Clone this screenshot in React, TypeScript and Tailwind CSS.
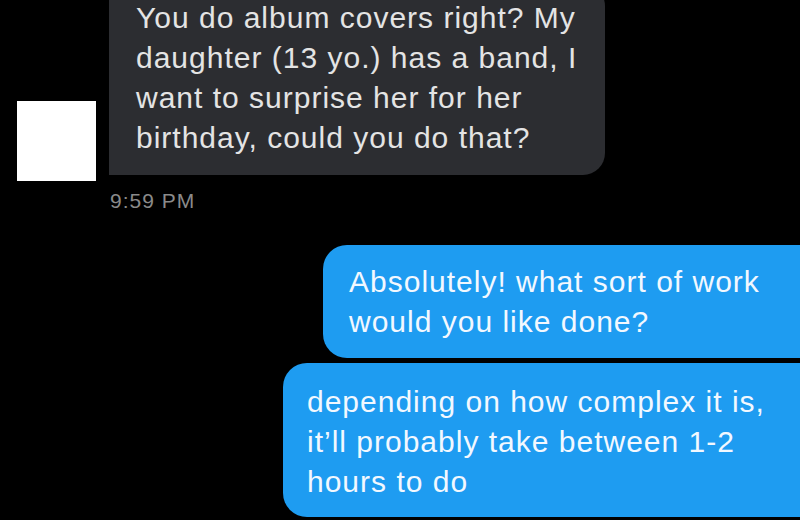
export default function App() {
  return (
    <div
      className="w-[800px] h-[520px] bg-black overflow-hidden flex flex-col"
      style={{ fontFamily: '"Liberation Sans", Arial, sans-serif' }}>
      <div className="flex items-end gap-[13px] pl-[17px] mt-[-16px]">
        <div className="w-[79px] h-[80px] bg-white mb-[-6px]" />
        <div className="w-[496px] bg-[#2c2d31] rounded-tr-[22px] rounded-br-[22px] pl-[27px] pt-[14px] pb-[17px] text-[30px] leading-[40px] tracking-[1px] text-[#e4e4e4]">
          You do album covers right? My
          <br />
          daughter (13 yo.) has a band, I
          <br />
          want to surprise her for her
          <br />
          birthday, could you do that?
        </div>
      </div>
      <div className="mt-[14px] pl-[110px] text-[21px] leading-[24px] tracking-[1px] text-[#8a8a8a]">9:59 PM</div>
      <div className="mt-[32px] ml-[323px] mr-[-30px] bg-[#1e9cf1] rounded-[24px] pl-[26px] pt-[17px] pb-[16px] text-[30px] leading-[40px] tracking-[1px] text-[#f2f8ff]">
        Absolutely! what sort of work
        <br />
        would you like done?
      </div>
      <div className="mt-[5px] ml-[283px] mr-[-30px] bg-[#1e9cf1] rounded-[24px] pl-[24px] pt-[19px] pb-[15px] text-[30px] leading-[40px] tracking-[1px] text-[#f2f8ff]">
        depending on how complex it is,
        <br />
        it’ll probably take between 1-2
        <br />
        hours to do
      </div>
    </div>
  );
}
